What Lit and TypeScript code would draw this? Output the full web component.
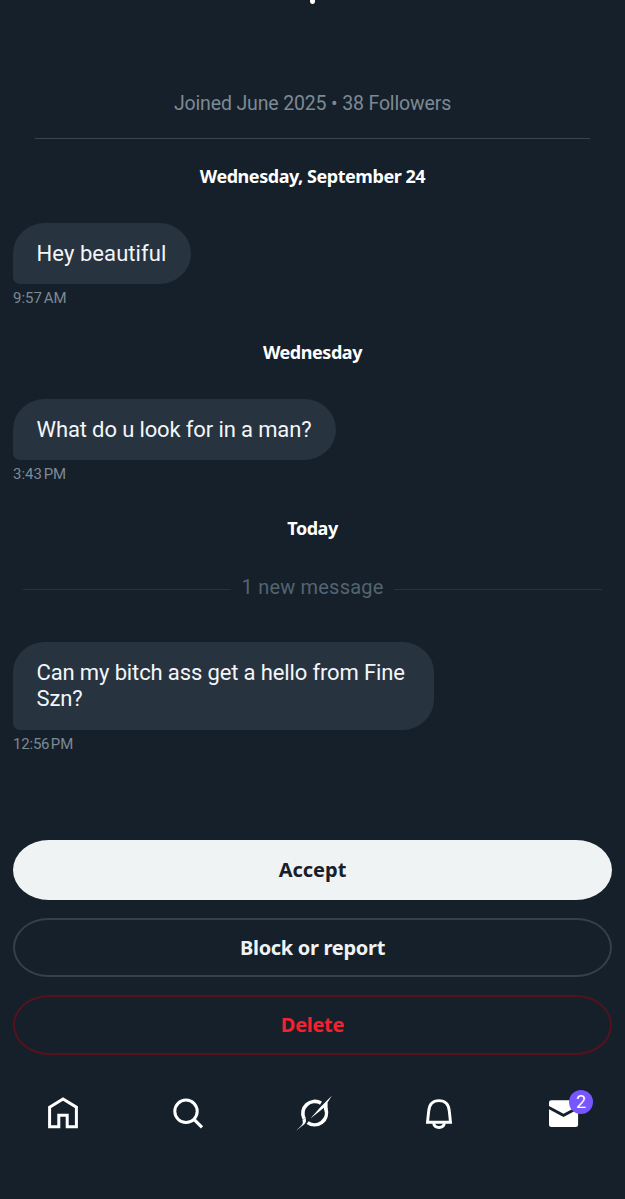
import { LitElement, html, css, svg } from "lit";
import { customElement, property } from "lit/decorators.js";

@customElement("chat-message")
class ChatMessage extends LitElement {
  @property() text = "";
  @property() time = "";

  static styles = css`
    :host { display: flex; flex-direction: column; align-items: flex-start; padding-left: 13px; letter-spacing: -0.13px; }
    :host(.short) { letter-spacing: 0.08px; }
    .bubble {
      box-sizing: border-box;
      max-width: 420.5px;
      padding: 17.5px 24.5px 17.5px 23.5px;
      border-radius: 32px 32px 32px 7px / 30.5px 30.5px 30.5px 7px;
      background: #283340;
      color: #f3f6f8;
      font-size: 22px;
      line-height: 26px;
    }
    :host(.long) .bubble { padding-bottom: 18.5px; padding-right: 20px; }
    .time { margin-top: 5px; height: 18px; font-size: 15px; line-height: 18px; color: #7d8994; word-spacing: -2px; letter-spacing: 0; }
    :host(.long) .time { letter-spacing: -0.2px; }
  `;

  render() {
    return html`<div class="bubble">${this.text}</div><div class="time">${this.time}</div>`;
  }
}

@customElement("nav-bar")
class NavBar extends LitElement {
  static styles = css`
    :host { display: grid; grid-template-columns: repeat(5, 1fr); height: 60px; }
    .item { display: flex; align-items: center; justify-content: center; position: relative; }
    svg { display: block; width: 40px; height: 40px; overflow: visible; }
    .badge {
      position: absolute; left: 69px; top: 6px; width: 24px; height: 24px; border-radius: 50%;
      background: #7856ff; color: #fff; font-size: 18px; line-height: 24px; text-align: center;
    }
  `;

  render() {
    const icons = [
      svg`<path d="M6.6 13.2 20 5l13.4 8.2v19.6h-9.2V21.200h-8.4v11.600H6.6z" fill="none" stroke="#fff" stroke-width="3"/>`,
      svg`<circle cx="18" cy="17.3" r="11.2" fill="none" stroke="#fff" stroke-width="3"/><path d="m26 25.3 8 8" stroke="#fff" stroke-width="3.2"/>`,
      svg`<path d="M28 9.100A12 12 0 0 0 11.100 24.800M32.800 14.700A12 12 0 0 1 14.600 28.600" fill="none" stroke="#fff" stroke-width="3.600"/><path fill="#fff" d="M38.800 1.700 34.600 8.500V15.300L31.200 16.200 31 13.800 17.500 24.500 27.500 13zM3.200 36.700C8 32 11 30 9.400 26L12.600 23.800C13 27 13.500 28 11.500 30z"/>`,
      svg`<path d="M9.500 28.200 10.700 17C11.300 10.200 15.300 6.600 21 6.600s9.700 3.600 10.300 10.400l1.200 11.200z" fill="none" stroke="#fff" stroke-width="2.900"/><path d="M15.500 29c.6 3 2.700 4.500 5.500 4.500s4.900-1.500 5.500-4.500" fill="none" stroke="#fff" stroke-width="2.900"/>`,
      svg`<path fill="#fff" d="M6 12V8.500a2.300 2.300 0 0 1 2.300-2.300h24.500A2.300 2.300 0 0 1 35.100 8.500V12L20.500 19.700zM6 15.300 20.500 23l14.600-7.700v15.500a2.300 2.300 0 0 1-2.300 2.300H8.300A2.300 2.300 0 0 1 6 30.800z"/>`,
    ];
    return icons.map(
      (icon, i) => html`<div class="item"><svg viewBox="0 0 40 40">${icon}</svg>${i === 4 ? html`<span class="badge">2</span>` : ""}</div>`
    );
  }
}

@customElement("app-root")
class AppRoot extends LitElement {
  static styles = css`
    :host {
      display: flex; flex-direction: column; box-sizing: border-box; height: 1199px; overflow: hidden;
      background: #16202a; color: #fff; font-family: Roboto, "Open Sans", sans-serif;
    }
    .peek { height: 92px; display: flex; justify-content: center; }
    .dot { width: 5px; height: 6px; margin-top: -2.5px; border-radius: 50%; background: #fff; }
    .joined { height: 24px; line-height: 24px; text-align: center; font-size: 19.5px; color: #7d8994; letter-spacing: -0.15px; }
    .rule { height: 1px; margin: 22px 35px 0; background: #3a4550; }
    .date { height: 24px; text-align: center; font: 700 18px/22px "Noto Sans", sans-serif; letter-spacing: -0.45px; }
    .first { margin-top: 26px; }
    .later { margin-top: 34px; }
    .date + chat-message { margin-top: 34px; }
    .unread { display: flex; align-items: center; gap: 11px; height: 26px; margin: 34px 23px 41px; color: #536471; font-size: 20px; letter-spacing: 0.2px; }
    .count { padding-bottom: 2px; }
    .line { flex: 1; height: 1px; margin-top: 3px; background: #26323d; }
    .actions { display: flex; flex-direction: column; gap: 18px; margin: 87px 13px 0; }
    button {
      box-sizing: border-box; height: 59.5px; padding: 0; border: 2px solid; border-radius: 36px / 30px;
      background: none; font: 700 20px "Noto Sans", sans-serif; letter-spacing: -0.3px;
    }
    .accept { background: #eff3f4; border-color: #eff3f4; color: #17202a; letter-spacing: 0; }
    .block { border-color: #33404d; color: #eff3f4; }
    .delete { border-color: #55121e; color: #f4212e; }
    nav-bar { margin-top: 29px; }
  `;

  render() {
    return html`
      <div class="peek"><div class="dot"></div></div>
      <div class="joined">Joined June 2025 • 38 Followers</div>
      <div class="rule"></div>
      <div class="date first">Wednesday, September 24</div>
      <chat-message class="short" text="Hey beautiful" time="9:57 AM"></chat-message>
      <div class="date later">Wednesday</div>
      <chat-message text="What do u look for in a man?" time="3:43 PM"></chat-message>
      <div class="date later">Today</div>
      <div class="unread"><span class="line"></span><span class="count">1 new message</span><span class="line"></span></div>
      <chat-message class="long" text="Can my bitch ass get a hello from Fine Szn?" time="12:56 PM"></chat-message>
      <div class="actions">
        <button class="accept">Accept</button>
        <button class="block">Block or report</button>
        <button class="delete">Delete</button>
      </div>
      <nav-bar></nav-bar>
    `;
  }
}
